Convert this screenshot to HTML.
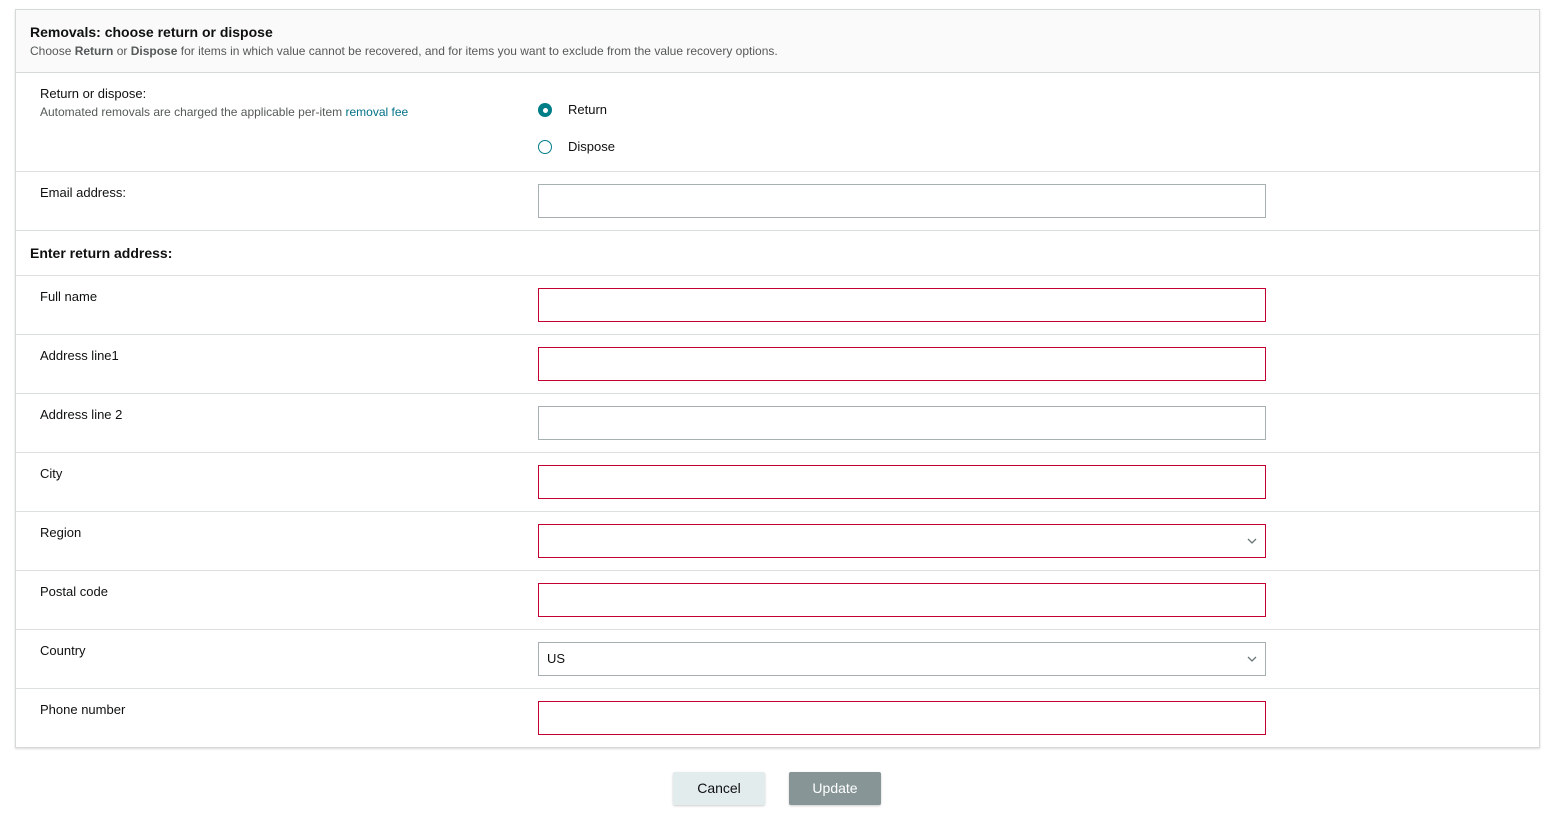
<!DOCTYPE html>
<html><head><style>
body{margin:0;width:1557px;height:822px;background:#fff;font-family:"Liberation Sans",Arial,sans-serif;color:#0f1111;position:relative;overflow:hidden}
.panel{position:absolute;left:15px;top:9px;width:1523px;height:737px;border:1px solid #d5d9d9;box-shadow:0 1px 2px rgba(0,0,0,.15)}
.hdr{position:absolute;left:0;top:0;width:1523px;height:62px;background:#fafafa;border-bottom:1px solid #d5d9d9}
.a{position:absolute}
.line{position:absolute;left:0;width:1523px;height:1px;background:#dcdfe0}
.lbl{position:absolute;left:24px;font-size:13px}
.in{position:absolute;left:522px;width:726px;height:32px;border:1px solid #a6b0b0;background:#fff}
.err{border-color:#c40030}
.chev{position:absolute;right:8px;top:11px}
.btn{position:absolute;top:772px;height:33px;font-size:14px;text-align:center;line-height:33px;border-radius:2px;box-shadow:0 1px 2px rgba(0,0,0,.2)}
</style></head><body>
<div class="panel">
<div class="hdr">
<div class="a" style="left:14px;top:14px;font-size:14px;font-weight:bold">Removals: choose return or dispose</div>
<div class="a" style="left:14px;top:34px;font-size:12px;color:#565959">Choose <b>Return</b> or <b>Dispose</b> for items in which value cannot be recovered, and for items you want to exclude from the value recovery options.</div>
</div>
<div class="lbl" style="top:76px">Return or dispose:</div>
<div class="a" style="left:24px;top:95px;font-size:12px;color:#565959">Automated removals are charged the applicable per-item <span style="color:#007185">removal fee</span></div>
<div class="a" style="left:522px;top:93px;width:14px;height:14px;border-radius:50%;background:#007e87"><div style="position:absolute;left:4.5px;top:4.5px;width:5px;height:5px;border-radius:50%;background:#fff"></div></div>
<div class="a" style="left:552px;top:92px;font-size:13px">Return</div>
<div class="a" style="left:522px;top:130px;width:12px;height:12px;border-radius:50%;border:1px solid #007e87"></div>
<div class="a" style="left:552px;top:129px;font-size:13px">Dispose</div>
<div class="line" style="top:161px"></div>
<div class="lbl" style="top:175px">Email address:</div>
<div class="in" style="top:174px"></div>
<div class="line" style="top:220px"></div>
<div class="a" style="left:14px;top:235px;font-size:14px;font-weight:bold">Enter return address:</div>
<div class="line" style="top:265px"></div>
<div class="lbl" style="top:279px">Full name</div><div class="in err" style="top:278px"></div>
<div class="line" style="top:324px"></div>
<div class="lbl" style="top:338px">Address line1</div><div class="in err" style="top:337px"></div>
<div class="line" style="top:383px"></div>
<div class="lbl" style="top:397px">Address line 2</div><div class="in" style="top:396px"></div>
<div class="line" style="top:442px"></div>
<div class="lbl" style="top:456px">City</div><div class="in err" style="top:455px"></div>
<div class="line" style="top:501px"></div>
<div class="lbl" style="top:515px">Region</div><div class="in err" style="top:514px"><svg class="chev" width="10" height="10" viewBox="0 0 10 10"><path d="M1 3l4 4 4-4" fill="none" stroke="#6b7676" stroke-width="1.3"/></svg></div>
<div class="line" style="top:560px"></div>
<div class="lbl" style="top:574px">Postal code</div><div class="in err" style="top:573px"></div>
<div class="line" style="top:619px"></div>
<div class="lbl" style="top:633px">Country</div><div class="in" style="top:632px"><span style="position:absolute;left:8px;top:8px;font-size:13px">US</span><svg class="chev" width="10" height="10" viewBox="0 0 10 10"><path d="M1 3l4 4 4-4" fill="none" stroke="#6b7676" stroke-width="1.3"/></svg></div>
<div class="line" style="top:678px"></div>
<div class="lbl" style="top:692px">Phone number</div><div class="in err" style="top:691px"></div>
</div>
<div class="btn" style="left:673px;width:92px;background:#e3ecec;color:#0f1111">Cancel</div>
<div class="btn" style="left:789px;width:92px;background:#879596;color:#fff">Update</div>
</body></html>
